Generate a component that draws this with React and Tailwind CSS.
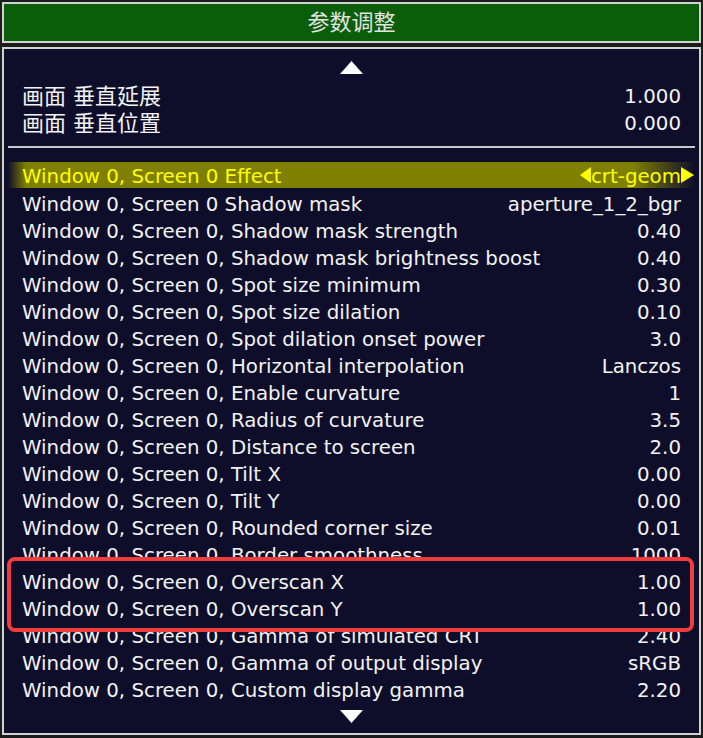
import React from "react";

const rows = [
  ["Window 0, Screen 0 Shadow mask", "aperture_1_2_bgr"],
  ["Window 0, Screen 0, Shadow mask strength", "0.40"],
  ["Window 0, Screen 0, Shadow mask brightness boost", "0.40"],
  ["Window 0, Screen 0, Spot size minimum", "0.30"],
  ["Window 0, Screen 0, Spot size dilation", "0.10"],
  ["Window 0, Screen 0, Spot dilation onset power", "3.0"],
  ["Window 0, Screen 0, Horizontal interpolation", "Lanczos"],
  ["Window 0, Screen 0, Enable curvature", "1"],
  ["Window 0, Screen 0, Radius of curvature", "3.5"],
  ["Window 0, Screen 0, Distance to screen", "2.0"],
  ["Window 0, Screen 0, Tilt X", "0.00"],
  ["Window 0, Screen 0, Tilt Y", "0.00"],
  ["Window 0, Screen 0, Rounded corner size", "0.01"],
  ["Window 0, Screen 0, Border smoothness", "1000"],
];

const highlighted = [
  ["Window 0, Screen 0, Overscan X", "1.00"],
  ["Window 0, Screen 0, Overscan Y", "1.00"],
];

const after = [
  ["Window 0, Screen 0, Gamma of simulated CRT", "2.40"],
  ["Window 0, Screen 0, Gamma of output display", "sRGB"],
  ["Window 0, Screen 0, Custom display gamma", "2.20"],
];

function Row({ label, value, inset = "px-[14px]" }) {
  return (
    <div className={`flex h-[27px] items-center justify-between whitespace-nowrap pt-[4px] ${inset}`}>
      <span>{label}</span>
      <span>{value}</span>
    </div>
  );
}

export default function App() {
  return (
    <div
      className="flex h-[738px] w-[703px] flex-col gap-[4px] bg-[#1c1c1c] px-[2px] pt-[2px] pb-[3px] text-[19.8px] leading-[23px] text-[#f2f2f2]"
      style={{ fontFamily: '"DejaVu Sans", "Noto Sans CJK SC", sans-serif' }}
    >
      <div className="flex h-[41px] items-center justify-center border-2 border-[#d2d2d2] bg-[#0a5e0a] text-[22px] text-[#e2e2e2]">
        参数调整
      </div>

      <div className="flex-1 border-2 border-[#d2d2d2] bg-[#0e0e2b] px-[4px] pt-[5px]">
        <div className="flex h-[27px] items-center justify-center">
          <svg width="23" height="13" viewBox="0 0 23 13">
            <polygon points="11.5,0 23,13 0,13" fill="#ffffff" />
          </svg>
        </div>

        <div className="flex h-[27px] items-center justify-between px-[14px] pt-[3px]">
          <span className="text-[22px]">画面 垂直延展</span>
          <span>1.000</span>
        </div>
        <div className="flex h-[27px] items-center justify-between px-[14px] pt-[3px]">
          <span className="text-[22px]">画面 垂直位置</span>
          <span>0.000</span>
        </div>

        <div className="h-[27px] pt-[11px]">
          <div className="h-[2px] bg-[#c8c8c8]" />
        </div>

        <div className="flex h-[26px] items-center justify-between bg-[linear-gradient(90deg,#0e0e2b_0px,#808000_18px,#808000_calc(100%_-_62px),#0e0e2b_100%)] pt-[2px] pl-[14px] pr-[1px] text-[#ffff00]">
          <span>Window 0, Screen 0 Effect</span>
          <span className="flex items-center">
            <svg width="11" height="16" viewBox="0 0 11 16" className="-mt-[2px]">
              <polygon points="0,8 11,0 11,16" fill="#ffff00" />
            </svg>
            <span>crt-geom</span>
            <svg width="13" height="16" viewBox="0 0 13 16" className="-mt-[2px]">
              <polygon points="0,0 13,8 0,16" fill="#ffff00" />
            </svg>
          </span>
        </div>
        <div className="h-[1px]" />

        {rows.map(([l, v]) => (
          <Row key={l} label={l} value={v} />
        ))}

        <div className="relative z-10 -mt-[10px] -mb-[11px] -ml-[1px] mr-[1px] rounded-[8px] border-4 border-[#f03c3c] bg-[#0e0e2b] pt-[6px] pb-[7px]">
          {highlighted.map(([l, v]) => (
            <Row key={l} label={l} value={v} inset="pl-[11px] pr-[9px]" />
          ))}
        </div>

        {after.map(([l, v]) => (
          <Row key={l} label={l} value={v} />
        ))}

        <div className="flex h-[27px] items-center justify-center pt-[1px]">
          <svg width="23" height="13" viewBox="0 0 23 13">
            <polygon points="0,0 23,0 11.5,13" fill="#ffffff" />
          </svg>
        </div>
      </div>
    </div>
  );
}
